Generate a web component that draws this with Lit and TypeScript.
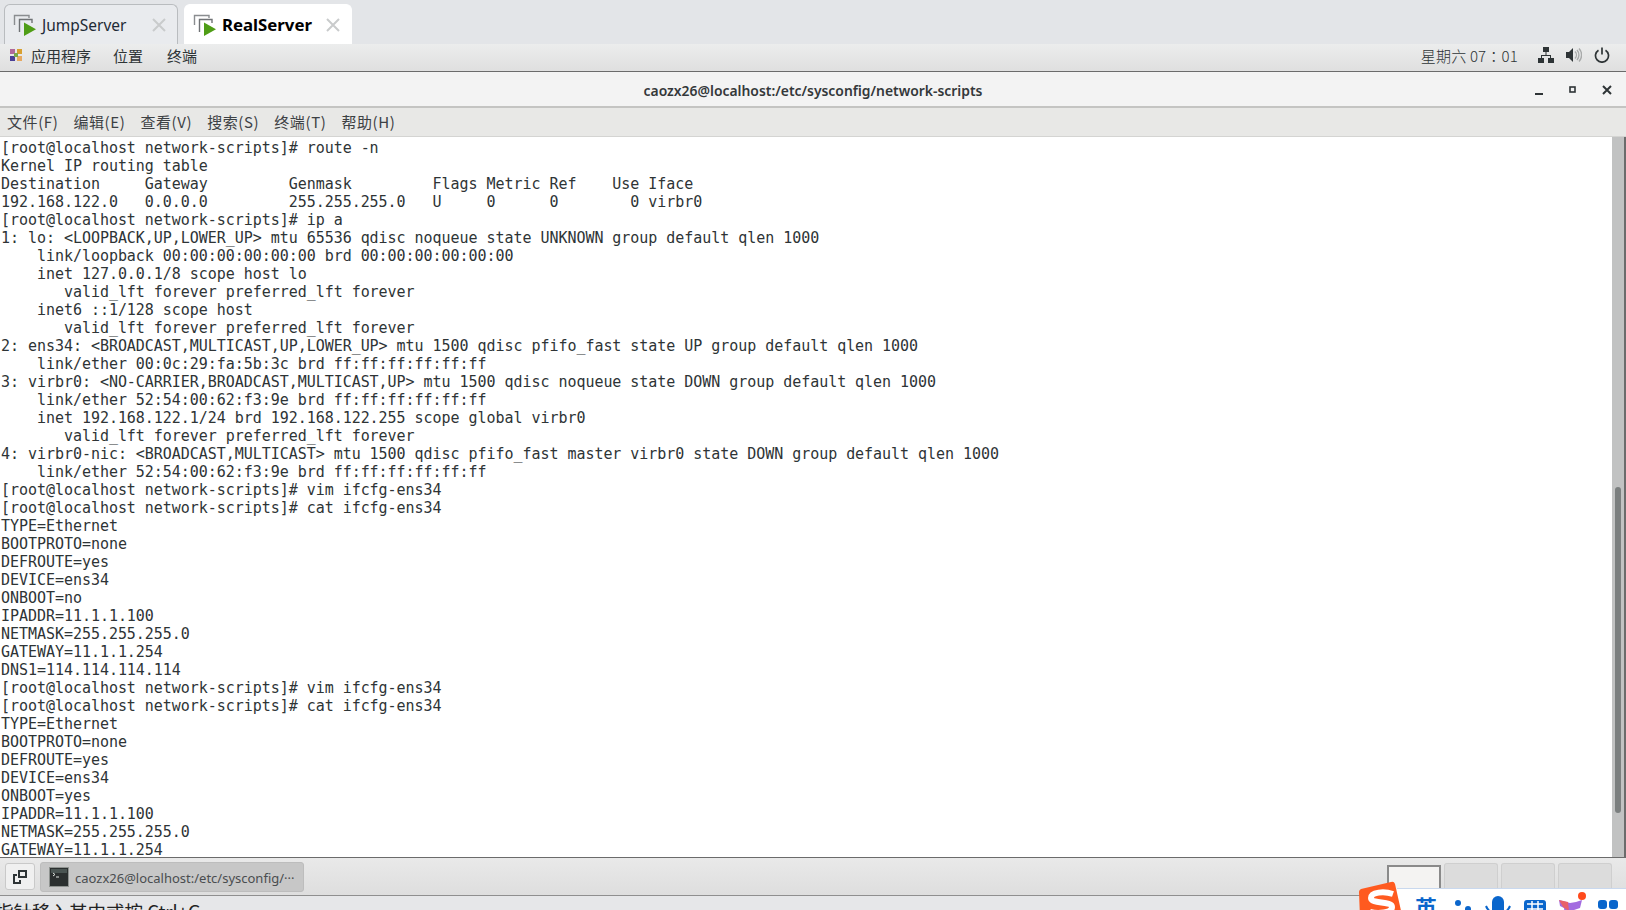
import { LitElement, html, css, svg } from "lit";
import { customElement } from "lit/decorators.js";

const TERM = `[root@localhost network-scripts]# route -n
Kernel IP routing table
Destination     Gateway         Genmask         Flags Metric Ref    Use Iface
192.168.122.0   0.0.0.0         255.255.255.0   U     0      0        0 virbr0
[root@localhost network-scripts]# ip a
1: lo: <LOOPBACK,UP,LOWER_UP> mtu 65536 qdisc noqueue state UNKNOWN group default qlen 1000
    link/loopback 00:00:00:00:00:00 brd 00:00:00:00:00:00
    inet 127.0.0.1/8 scope host lo
       valid_lft forever preferred_lft forever
    inet6 ::1/128 scope host
       valid_lft forever preferred_lft forever
2: ens34: <BROADCAST,MULTICAST,UP,LOWER_UP> mtu 1500 qdisc pfifo_fast state UP group default qlen 1000
    link/ether 00:0c:29:fa:5b:3c brd ff:ff:ff:ff:ff:ff
3: virbr0: <NO-CARRIER,BROADCAST,MULTICAST,UP> mtu 1500 qdisc noqueue state DOWN group default qlen 1000
    link/ether 52:54:00:62:f3:9e brd ff:ff:ff:ff:ff:ff
    inet 192.168.122.1/24 brd 192.168.122.255 scope global virbr0
       valid_lft forever preferred_lft forever
4: virbr0-nic: <BROADCAST,MULTICAST> mtu 1500 qdisc pfifo_fast master virbr0 state DOWN group default qlen 1000
    link/ether 52:54:00:62:f3:9e brd ff:ff:ff:ff:ff:ff
[root@localhost network-scripts]# vim ifcfg-ens34
[root@localhost network-scripts]# cat ifcfg-ens34
TYPE=Ethernet
BOOTPROTO=none
DEFROUTE=yes
DEVICE=ens34
ONBOOT=no
IPADDR=11.1.1.100
NETMASK=255.255.255.0
GATEWAY=11.1.1.254
DNS1=114.114.114.114
[root@localhost network-scripts]# vim ifcfg-ens34
[root@localhost network-scripts]# cat ifcfg-ens34
TYPE=Ethernet
BOOTPROTO=none
DEFROUTE=yes
DEVICE=ens34
ONBOOT=yes
IPADDR=11.1.1.100
NETMASK=255.255.255.0
GATEWAY=11.1.1.254`;

const vmIcon = svg`<svg width="24" height="24" viewBox="0 0 24 24" fill="none">
  <path d="M1.500 12V2.500H16V5" stroke="#8a8d90" stroke-width="1.400"/>
  <path d="M6.500 19V6.500H19V10" stroke="#6f7275" stroke-width="1.400"/>
  <path d="M11 9.500V23L23 16.200Z" fill="#4f9d16"/>
</svg>`;

@customElement("app-root")
export class AppRoot extends LitElement {
  static styles = css`
    :host { display: flex; flex-direction: column; width: 1626px; height: 910px; overflow: hidden; position: relative; background: #e6e7e9; font-family: "Noto Sans", "Noto Sans CJK SC", sans-serif; }
    .tabs { height: 44px; flex: none; display: flex; align-items: flex-end; gap: 6px; padding-left: 4px; background: #e3e5e8; box-sizing: border-box; }
    .tab { height: 40px; box-sizing: border-box; border: 1px solid #b9bcbf; border-bottom: none; border-radius: 6px 6px 0 0; display: flex; align-items: center; padding: 0 10px 0 8px; font-size: 15.5px; color: #1e2a36; background: #e9ebee; font-family: "Noto Sans", sans-serif; }
    .tab.j { width: 174px; }
    .tab.r { width: 168px; background: #fff; border-color: #fff; font-weight: 700; font-size: 16.8px; color: #000; }
    .tab .ic { width: 24px; height: 24px; margin-right: 5px; flex: none; }
    .tab .name { flex: 1; }
    .tab .x { width: 16px; height: 16px; flex: none; }
    .panel { height: 27px; flex: none; box-sizing: border-box; display: flex; align-items: center; padding: 0 16px 5px 8px; background: linear-gradient(#eceded, #dfdfdf); font-family: "Noto Sans CJK SC", sans-serif; font-size: 15px; color: #2e3436; }
    .panel .apps { margin-left: 7px; margin-right: 22px; }
    .panel .place { margin-right: 24px; }
    .panel .spacer { flex: 1; }
    .panel .clock { margin-right: 20px; letter-spacing: .2px; font-family: "Noto Sans CJK TC", sans-serif; font-weight: 300; }
    .panel .tray { display: flex; align-items: center; gap: 12px; }
    .rule { height: 1px; flex: none; background: #6b6b6b; }
    .title { height: 36px; flex: none; box-sizing: border-box; padding-top: 2px; display: grid; grid-template-columns: 1fr auto 1fr; align-items: center; background: #f3f3f3; border-bottom: 2px solid #c4c4c2; font-size: 13.9px; font-weight: 600; color: #34383a; font-family: "Noto Sans", sans-serif; }
    .title .txt { grid-column: 2; }
    .title .wbtns { grid-column: 3; justify-self: end; display: flex; align-items: center; gap: 24px; padding-right: 14px; }
    .menu { height: 29px; flex: none; box-sizing: border-box; display: flex; align-items: center; gap: 15px; padding: 0 0 1px 7px; background: #e8e8e6; border-bottom: 1px solid #d4d4d2; font-size: 15px; letter-spacing: .6px; color: #3d4144; font-family: "Noto Sans CJK SC", sans-serif; }
    .term { flex: 1; min-height: 0; display: flex; background: #fff; }
    .term pre { flex: 1; min-width: 0; margin: 0; padding: 2px 0 0 1px; overflow: hidden; font-family: "DejaVu Sans Mono", monospace; font-size: 15px; letter-spacing: -0.04px; line-height: 18px; color: #2e3436; }
    .sb { width: 12px; flex: none; background: #c1c2c2; box-sizing: border-box; padding: 350px 3px 44px; }
    .sb i { display: block; height: 100%; background: #7b7f7f; border-radius: 3px; }
    .edge { width: 2px; flex: none; background: #6b6b6b; }
    .task { height: 38px; flex: none; box-sizing: border-box; display: flex; align-items: center; padding-left: 5px; background: linear-gradient(#e9e9e9, #dedede); border-top: 1px solid #6b6b6b; font-family: "Noto Sans", sans-serif; font-size: 13px; color: #4a4d4f; }
    .showdesk { width: 30px; height: 27px; box-sizing: border-box; border: 1px solid #c9c9c9; border-radius: 3px; background: #f0f0f0; display: flex; align-items: center; justify-content: center; margin-right: 5px; }
    .win { width: 264px; height: 30px; box-sizing: border-box; background: #c7c7c7; border: 1px solid #bdbdbd; border-radius: 3px; display: flex; align-items: center; padding: 1px 0 0 8px; gap: 6px; white-space: nowrap; }
    .win span { padding-top: 2px; }
    .spacer { flex: 1; }
    .ws { display: flex; align-self: flex-end; align-items: flex-end; gap: 3px; margin-right: 14px; }
    .ws b { width: 54px; height: 32px; box-sizing: border-box; border: 1px solid #cfcfcf; border-bottom: none; border-radius: 3px 3px 0 0; background: #dcdcdc; }
    .ws b.on { height: 30px; background: #f4f3f2; border: 2px solid #8a8a8a; border-bottom: none; border-radius: 0; }
    .status { height: 14px; flex: none; overflow: hidden; background: #e6e7e9; border-top: 1px solid #8f8f8f; font-family: "Noto Sans CJK SC", sans-serif; font-size: 18.5px; line-height: 30px; color: #222; white-space: nowrap; text-indent: -5px; }
    .ime { position: absolute; left: 1397px; top: 888px; width: 229px; height: 22px; background: #fff; border-top: 1px solid #c9d8ee; overflow: hidden; }
    .sogou { position: absolute; left: 1358px; top: 881px; width: 48px; height: 40px; }
  `;

  render() {
    return html`
      <div class="tabs">
        <div class="tab j"><span class="ic">${vmIcon}</span><span class="name">JumpServer</span>${this.x()}</div>
        <div class="tab r"><span class="ic">${vmIcon}</span><span class="name">RealServer</span>${this.x()}</div>
      </div>
      <div class="panel">
        <svg width="16" height="16" viewBox="0 0 16 16"><rect x="2" y="2" width="5" height="5" fill="#b0689a"/><rect x="9" y="2" width="5" height="5" fill="#d8a030"/><rect x="2" y="9" width="5" height="5" fill="#4a3f96"/><rect x="9" y="9" width="5" height="5" fill="#e6a860"/><rect x="6" y="6" width="4" height="4" fill="#7aa84a"/></svg>
        <span class="apps">应用程序</span><span class="place">位置</span><span>终端</span>
        <span class="spacer"></span>
        <span class="clock">星期六 07：01</span>
        <div class="tray">
          <svg width="16" height="16" viewBox="0 0 16 16" fill="#2e3436"><rect x="5" y="0" width="6" height="5"/><rect x="0" y="11" width="6" height="5"/><rect x="10" y="11" width="6" height="5"/><path d="M7.500 5h1v3H13v3h-1V9H4v2H3V8h4.500z"/></svg>
          <svg width="16" height="16" viewBox="0 0 16 16"><path d="M0 5h3l4-4v14l-4-4H0z" fill="#2e3436"/><path d="M9 4.500a5 5 0 0 1 0 7M11 3a7.500 7.500 0 0 1 0 10M13 1.500a9.500 9.500 0 0 1 0 13" fill="none" stroke="#a9abab" stroke-width="1.400"/></svg>
          <svg width="16" height="16" viewBox="0 0 16 16" fill="none" stroke="#2e3436" stroke-width="1.700"><path d="M4.500 3.200a6.500 6.500 0 1 0 7 0"/><path d="M8 0.500v7"/></svg>
        </div>
      </div>
      <div class="rule"></div>
      <div class="title">
        <span class="txt">caozx26@localhost:/etc/sysconfig/network-scripts</span>
        <div class="wbtns">
          <svg width="10" height="10" viewBox="0 0 10 10"><rect x="1" y="8" width="8" height="2" fill="#2e3436"/></svg>
          <svg width="10" height="10" viewBox="0 0 10 10"><rect x="2" y="2" width="5" height="5" fill="none" stroke="#2e3436" stroke-width="1.600"/></svg>
          <svg width="10" height="10" viewBox="0 0 10 10"><path d="M1 1l8 8M9 1l-8 8" stroke="#2e3436" stroke-width="2"/></svg>
        </div>
      </div>
      <div class="menu"><span>文件(F)</span><span>编辑(E)</span><span>查看(V)</span><span>搜索(S)</span><span>终端(T)</span><span>帮助(H)</span></div>
      <div class="term">
        <pre>${TERM}</pre>
        <div class="sb"><i></i></div>
        <div class="edge"></div>
      </div>
      <div class="task">
        <div class="showdesk"><svg width="16" height="16" viewBox="0 0 16 16" fill="none" stroke="#2e3436" stroke-width="2"><rect x="7" y="2" width="7" height="6"/><path d="M5 6H2v8h6v-3"/></svg></div>
        <div class="win">
          <svg width="20" height="20" viewBox="0 0 20 20"><rect x="0.500" y="0.500" width="19" height="19" fill="#2b2f2f" stroke="#8f9390"/><rect x="2" y="2" width="16" height="4" fill="#4a5452"/><path d="M4 6l2 1.500L4 9M7 10h3" stroke="#dfe3e0" stroke-width="1" fill="none"/></svg>
          <span>caozx26@localhost:/etc/sysconfig/···</span>
        </div>
        <span class="spacer"></span>
        <div class="ws"><b class="on"></b><b></b><b></b><b></b></div>
      </div>
      <div class="status">指针移入其中或按 Ctrl+G</div>
      <div class="ime">
        <svg width="229" height="22" viewBox="0 0 229 22" fill="#0a66cc">
          <text x="18" y="27" font-size="22" font-family="Noto Sans CJK SC" font-weight="700">英</text>
          <circle cx="61" cy="14" r="3"/><circle cx="71" cy="20" r="3"/>
          <rect x="95" y="7" width="12" height="20" rx="6"/><path d="M89 17a13 13 0 0 0 24 0" fill="none" stroke="#0a66cc" stroke-width="2"/>
          <rect x="127" y="11" width="22" height="16" rx="3"/><path d="M130 15h16M130 20h16M135 12v12M141 12v12" stroke="#fff" stroke-width="1.500"/>
          <path d="M162 11l11 3 6-1 6-2-2 8-6 2-1 6h-8l-1-8-4-2z" fill="#a36be0"/><path d="M162 11l9 2 1 9-6-4z" fill="#e8606a"/><circle cx="185" cy="7" r="4" fill="#ff4a1c"/>
          <rect x="201" y="11" width="9" height="9" rx="3"/><rect x="212" y="11" width="9" height="9" rx="3"/>
        </svg>
      </div>
      <svg class="sogou" viewBox="0 0 48 40"><path d="M3 8l30-7q3-1 4 2l7 31-38 6q-3 0-4-3L1 11q0-2 2-3z" fill="#ff5a1f"/><path d="M35 13c-9-3-22-2-22 4s21 3 21 9-14 7-22 5" fill="none" stroke="#fff" stroke-width="6"/></svg>
    `;
  }

  private x() {
    return svg`<svg class="x" viewBox="0 0 16 16"><path d="M2 2l12 12M14 2L2 14" stroke="#c9cbcc" stroke-width="2"/></svg>`;
  }
}
